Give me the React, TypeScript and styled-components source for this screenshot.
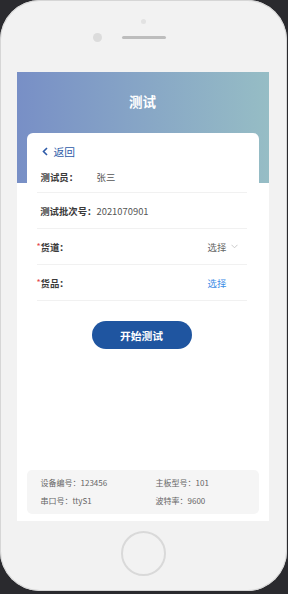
import React from 'react';
import styled, { createGlobalStyle } from 'styled-components';

const GlobalStyle = createGlobalStyle`
  html, body {
    margin: 0;
    padding: 0;
    background: #2a2a2e;
  }
  body {
    font-family: "Noto Sans CJK SC", "Noto Sans", "Liberation Sans", sans-serif;
    -webkit-font-smoothing: antialiased;
  }
`;

const Phone = styled.div`
  box-sizing: border-box;
  width: 287px;
  height: 591px;
  margin: 0 1px 0 0;
  border-radius: 40px;
  background: #f2f2f2;
  box-shadow: inset 0 0 0 1px #d6d6d6;
  display: flex;
  flex-direction: column;
  align-items: center;
`;

const TopBar = styled.div`
  box-sizing: border-box;
  height: 72px;
  padding-top: 19px;
  display: flex;
  flex-direction: column;
  align-items: center;
  gap: 9px;
`;

const Dot = styled.div`
  width: 5px;
  height: 5px;
  border-radius: 50%;
  background: #e2e2e2;
`;

const SensorRow = styled.div`
  display: flex;
  align-items: center;
  gap: 20px;
`;

const Camera = styled.div`
  width: 9px;
  height: 9px;
  border-radius: 50%;
  background: #dcdcdc;
`;

const Speaker = styled.div`
  width: 44px;
  height: 3px;
  border-radius: 2px;
  background: #bdbdbd;
  margin-right: 29px;
`;

const Screen = styled.div`
  width: 252px;
  height: 449px;
  margin-right: 2px;
  display: flex;
  flex-direction: column;
  background: linear-gradient(90deg, #788fc6 0%, #87a6c6 50%, #96bdc5 100%) top / 100% 111px no-repeat, #fff;
`;

const Title = styled.div`
  box-sizing: border-box;
  height: 61px;
  padding-bottom: 4px;
  display: flex;
  align-items: center;
  justify-content: center;
  color: #fff;
  font-size: 13.5px;
  font-weight: 700;
`;

const Card = styled.div`
  margin: 0 10px;
  padding: 8px 12px 0 10px;
  background: #fff;
  border-radius: 6px;
`;

const Back = styled.div`
  height: 20px;
  display: flex;
  align-items: center;
  gap: 6px;
  padding-left: 5px;
  color: #2e5ba8;
  font-size: 10.75px;
`;

const Row = styled.div<{ $h?: number }>`
  height: ${({ $h }) => $h ?? 36}px;
  box-sizing: border-box;
  display: flex;
  align-items: center;
  border-bottom: 1px solid #f1f1f1;
  font-size: 9.4px;
`;

const Label = styled.div`
  width: 60px;
  display: flex;
  align-items: center;
  color: #3a3a3a;
  font-weight: 700;
  white-space: nowrap;
`;

const Star = styled.span`
  width: 4px;
  color: #e54545;
  font-weight: 400;
  font-size: 9px;
`;

const Value = styled.div`
  flex: 1;
  color: #555;
`;

const Picker = styled.div<{ $active?: boolean }>`
  width: 39px;
  display: flex;
  align-items: center;
  gap: 5px;
  color: ${({ $active }) => ($active ? '#3b8ce6' : '#666')};
`;

const Primary = styled.button`
  display: block;
  margin: 20px auto 0;
  width: 100px;
  height: 28px;
  border: none;
  border-radius: 14px;
  background: #1f55a0;
  color: #fff;
  font-family: inherit;
  font-size: 10.75px;
  font-weight: 700;
  padding: 0;
`;

const Info = styled.div`
  margin: auto 10px 7px;
  height: 44px;
  box-sizing: border-box;
  padding: 3px 0 0 14px;
  background: #f5f5f5;
  border-radius: 5px;
  display: grid;
  grid-template-columns: 115px 1fr;
  grid-auto-rows: 18px;
  align-items: center;
  color: #666;
  font-size: 8px;
`;

const Home = styled.div`
  margin-top: 10px;
  width: 41px;
  height: 41px;
  border-radius: 50%;
  border: 2px solid #d9d9d9;
`;

const rows = [
  { label: '测试员：', value: '张三', h: 32 },
  { label: '测试批次号：', value: '2021070901' },
];

const info = [
  ['设备编号：', '123456'],
  ['主板型号：', '101'],
  ['串口号：', 'ttyS1'],
  ['波特率：', '9600'],
];

export default function App() {
  return (
    <>
      <GlobalStyle />
      <Phone>
        <TopBar>
          <Dot />
          <SensorRow>
            <Camera />
            <Speaker />
          </SensorRow>
        </TopBar>
        <Screen>
          <Title>测试</Title>
          <Card>
            <Back>
              <svg width="6" height="9" viewBox="0 0 6 9">
                <path d="M5 1 L1.5 4.5 L5 8" fill="none" stroke="#2e5ba8" strokeWidth="1.6" />
              </svg>
              返回
            </Back>
            {rows.map((r) => (
              <Row key={r.label} $h={r.h}>
                <Label>
                  <Star />
                  {r.label}
                </Label>
                <Value>{r.value}</Value>
              </Row>
            ))}
            <Row>
              <Label>
                <Star>*</Star>
                货道：
              </Label>
              <Value />
              <Picker>
                选择
                <svg width="7" height="5" viewBox="0 0 7 5">
                  <path d="M0.5 0.8 L3.5 3.8 L6.5 0.8" fill="none" stroke="#c4c4c4" strokeWidth="0.9" />
                </svg>
              </Picker>
            </Row>
            <Row>
              <Label>
                <Star>*</Star>
                货品：
              </Label>
              <Value />
              <Picker $active>选择</Picker>
            </Row>
            <Primary>开始测试</Primary>
          </Card>
          <Info>
            {info.map(([k, v]) => (
              <span key={k}>
                {k}
                {v}
              </span>
            ))}
          </Info>
        </Screen>
        <Home />
      </Phone>
    </>
  );
}
